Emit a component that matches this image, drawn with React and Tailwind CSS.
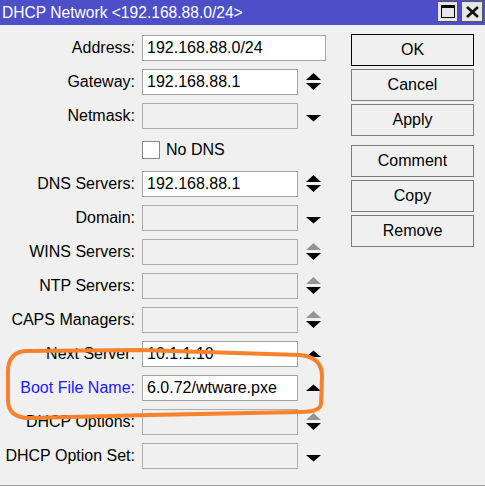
import React from 'react';

const BLACK = '#000000';
const GRAY = '#8e9890';

const Arrows = ({ type }) => {
  if (type === 'none') return <div className="w-[15px] ml-[8px]" />;
  if (type === 'down') {
    return (
      <svg className="ml-[8px]" width="15" height="18" viewBox="0 0 15 18">
        <polygon points="0,8 15,8 7.5,14.5" fill={BLACK} />
      </svg>
    );
  }
  if (type === 'up') {
    return (
      <svg className="ml-[8px]" width="15" height="18" viewBox="0 0 15 18">
        <polygon points="7.5,5.5 15,12 0,12" fill={BLACK} />
      </svg>
    );
  }
  const upColor = type === 'grayboth' ? GRAY : BLACK;
  return (
    <svg className="ml-[8px]" width="15" height="18" viewBox="0 0 15 18">
      <polygon points="7.5,0 15,7 0,7" fill={upColor} />
      <polygon points="0,10 15,10 7.5,17" fill={BLACK} />
    </svg>
  );
};

const Field = ({ label, value, enabled, wide, arrows, blue }) => (
  <div className="flex items-center h-[26px]">
    <div
      className={`w-[136px] pr-[1px] text-right whitespace-nowrap ${blue ? 'text-[#1a1aff]' : 'text-black'}`}
    >
      {label}
    </div>
    <div
      className={`ml-[6px] h-[26px] border flex items-center pl-[4px] ${
        wide ? 'w-[184px]' : 'w-[156px]'
      } ${enabled ? 'bg-white border-[#a3a3a3]' : 'bg-[#f0f0f0] border-[#adadad]'}`}
    >
      {value}
    </div>
    {!wide && <Arrows type={arrows} />}
  </div>
);

const Btn = ({ children, primary }) => (
  <div
    className={`w-[123px] h-[32px] flex items-center justify-center bg-[#f0f0f0] border ${
      primary ? 'border-black' : 'border-[#7d7d7d]'
    }`}
  >
    {children}
  </div>
);

export default function App() {
  return (
    <div
      className="relative w-[485px] h-[486px] bg-[#f0f0f0] flex flex-col overflow-hidden text-[16px] leading-none"
      style={{ fontFamily: '"Liberation Sans", Arial, sans-serif' }}
    >
      <div className="h-[25px] bg-[#4c4fc8] flex items-center justify-between pl-[2px] pr-[2px]">
        <span className="text-white text-[15.6px]">DHCP Network &lt;192.168.88.0/24&gt;</span>
        <div className="flex gap-[3px] pb-[2px]">
          <div className="w-[21px] h-[21px] bg-[#e6e6e6] border border-[#555] flex items-center justify-center">
            <div className="w-[14px] h-[13px] border border-black border-t-[3px]" />
          </div>
          <div className="w-[22px] h-[21px] bg-[#e6e6e6] border border-[#555] flex items-center justify-center">
            <svg width="13" height="12" viewBox="0 0 13 12">
              <path d="M1 1 L12 11 M12 1 L1 11" stroke="#111" strokeWidth="2.6" />
            </svg>
          </div>
        </div>
      </div>

      <div className="flex flex-1 border-b border-[#a0a0a0]">
        <div className="flex flex-col gap-[8px] pt-[10px]">
          <Field label="Address:" value="192.168.88.0/24" enabled wide />
          <Field label="Gateway:" value="192.168.88.1" enabled arrows="both" />
          <Field label="Netmask:" value="" arrows="down" />
          <div className="flex items-center h-[26px]">
            <div className="w-[136px]" />
            <div className="ml-[6px] w-[18px] h-[18px] bg-white border border-[#8a8a8a]" />
            <span className="ml-[6px]">No DNS</span>
          </div>
          <Field label="DNS Servers:" value="192.168.88.1" enabled arrows="both" />
          <Field label="Domain:" value="" arrows="down" />
          <Field label="WINS Servers:" value="" arrows="grayboth" />
          <Field label="NTP Servers:" value="" arrows="grayboth" />
          <Field label="CAPS Managers:" value="" arrows="grayboth" />
          <Field label="Next Server:" value="10.1.1.10" enabled arrows="up" />
          <Field label="Boot File Name:" value="6.0.72/wtware.pxe" enabled arrows="up" blue />
          <Field label="DHCP Options:" value="" arrows="grayboth" />
          <Field label="DHCP Option Set:" value="" arrows="down" />
        </div>

        <div className="flex flex-col ml-[25px] pt-[9px]">
          <div className="flex flex-col gap-[3px]">
            <Btn primary>OK</Btn>
            <Btn>Cancel</Btn>
            <Btn>Apply</Btn>
          </div>
          <div className="flex flex-col gap-[3px] mt-[9px]">
            <Btn>Comment</Btn>
            <Btn>Copy</Btn>
            <Btn>Remove</Btn>
          </div>
        </div>
      </div>

      <svg className="absolute left-0 top-0 pointer-events-none" width="485" height="486" viewBox="0 0 485 486">
        <path
          d="M26 351 L140 350 L300 355 Q322 357 322 376 L321 404 Q320 412 300 412 L150 415 L30 418 Q8 418 8 400 L8 372 Q8 352 26 351 Z"
          fill="none"
          stroke="#f7822b"
          strokeWidth="4"
          strokeLinejoin="round"
        />
      </svg>
    </div>
  );
}
